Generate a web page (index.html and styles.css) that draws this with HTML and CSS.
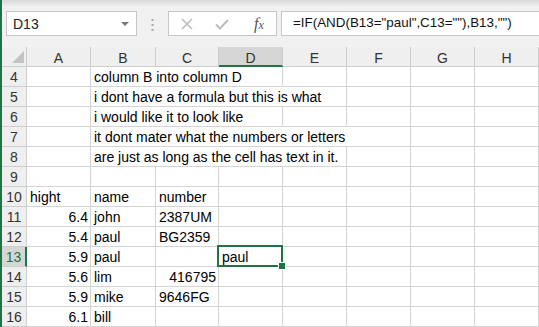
FILE: index.html
```html
<!DOCTYPE html>
<html lang="en">
<head>
  <meta charset="UTF-8">
  <title>Sheet</title>
  <link rel="stylesheet" href="styles.css">
</head>
<body>
  <div class="app">
    <!-- Barre de formule -->
    <div class="bar">
      <div class="namebox">
        <span>D13</span>
        <svg class="caret" width="8" height="5" viewBox="0 0 8 5"><path d="M0 0h8L4 4z" fill="#7a7a7a"/></svg>
      </div>
      <svg class="grip" width="3" height="12" viewBox="0 0 3 12">
        <rect x="0.5" y="0" width="2" height="2" fill="#a6a6a6"/>
        <rect x="0.5" y="5" width="2" height="2" fill="#a6a6a6"/>
        <rect x="0.5" y="10" width="2" height="2" fill="#a6a6a6"/>
      </svg>
      <div class="fxbox">
        <svg width="14" height="14" viewBox="0 0 14 14"><path d="M2 2l10 10M12 2L2 12" stroke="#bdbdbd" stroke-width="1.6" fill="none"/></svg>
        <svg width="16" height="14" viewBox="0 0 16 14"><path d="M2 7.5l4 4L14 3" stroke="#bdbdbd" stroke-width="2" fill="none"/></svg>
        <span class="fx">f<small>x</small></span>
      </div>
      <div class="formula">=IF(AND(B13="paul",C13=""),B13,"")</div>
    </div>

    <!-- Grille -->
    <div class="grid">
      <div class="corner"></div>
      <div class="ch">A</div><div class="ch">B</div><div class="ch">C</div><div class="ch sel">D</div>
      <div class="ch">E</div><div class="ch">F</div><div class="ch">G</div><div class="ch">H</div>

      <div class="rh">4</div><div class="c"></div><div class="c s3">column B into column D</div><div class="c"></div><div class="c"></div><div class="c"></div><div class="c"></div>
      <div class="rh">5</div><div class="c"></div><div class="c s4">i dont have a formula but this is what</div><div class="c"></div><div class="c"></div><div class="c"></div>
      <div class="rh">6</div><div class="c"></div><div class="c s3">i would like it to look like</div><div class="c"></div><div class="c"></div><div class="c"></div><div class="c"></div>
      <div class="rh">7</div><div class="c"></div><div class="c s5">it dont mater what the numbers or letters</div><div class="c"></div><div class="c"></div>
      <div class="rh">8</div><div class="c"></div><div class="c s4">are just as long as the cell has text in it.</div><div class="c"></div><div class="c"></div><div class="c"></div>
      <div class="rh">9</div><div class="c"></div><div class="c"></div><div class="c"></div><div class="c"></div><div class="c"></div><div class="c"></div><div class="c"></div><div class="c"></div>

      <div class="rh">10</div><div class="c">hight</div><div class="c">name</div><div class="c">number</div><div class="c"></div><div class="c"></div><div class="c"></div><div class="c"></div><div class="c"></div>
      <div class="rh">11</div><div class="c num">6.4</div><div class="c">john</div><div class="c">2387UM</div><div class="c"></div><div class="c"></div><div class="c"></div><div class="c"></div><div class="c"></div>
      <div class="rh">12</div><div class="c num">5.4</div><div class="c">paul</div><div class="c">BG2359</div><div class="c"></div><div class="c"></div><div class="c"></div><div class="c"></div><div class="c"></div>
      <div class="rh sel">13</div><div class="c num">5.9</div><div class="c">paul</div><div class="c"></div><div class="c active">paul</div><div class="c"></div><div class="c"></div><div class="c"></div><div class="c"></div>
      <div class="rh">14</div><div class="c num">5.6</div><div class="c">lim</div><div class="c num">416795</div><div class="c"></div><div class="c"></div><div class="c"></div><div class="c"></div><div class="c"></div>
      <div class="rh">15</div><div class="c num">5.9</div><div class="c">mike</div><div class="c">9646FG</div><div class="c"></div><div class="c"></div><div class="c"></div><div class="c"></div><div class="c"></div>
      <div class="rh">16</div><div class="c num">6.1</div><div class="c">bill</div><div class="c"></div><div class="c"></div><div class="c"></div><div class="c"></div><div class="c"></div><div class="c"></div>
    </div>
  </div>
</body>
</html>
```

FILE: styles.css
```css
* {
  box-sizing: border-box;
}

body {
  margin: 0;
  font-family: "Liberation Sans", Arial, sans-serif;
  background: #fff;
  overflow: hidden;
}

.app {
  width: 539px;
  height: 327px;
  border-left: 2px solid #217346;
}

/* Barre de formule */
.bar {
  height: 47px;
  display: flex;
  align-items: flex-start;
  padding-top: 11px;
  background: linear-gradient(#d9d9d9, #f1f1f1 7px);
}

.namebox {
  width: 131px;
  height: 25px;
  margin-left: 4px;
  background: #fff;
  border: 1px solid #c6c6c6;
  display: flex;
  align-items: center;
  justify-content: space-between;
  padding: 0 7px 0 6px;
  font-size: 14px;
  color: #222;
}

.caret {
  margin-top: 1px;
}

.grip {
  margin: 8px 14px 0 14px;
}

.fxbox {
  width: 109px;
  height: 25px;
  background: #fff;
  border: 1px solid #c6c6c6;
  display: flex;
  align-items: center;
  gap: 20px;
  padding-left: 11px;
}

.fx {
  font-family: "Liberation Serif", serif;
  font-style: italic;
  font-size: 16px;
  color: #555;
  margin-left: 4px;
}

.fx small {
  font-size: 12px;
}

.formula {
  flex: 1;
  height: 25px;
  margin-left: 4px;
  background: #fff;
  border: 1px solid #c6c6c6;
  border-right: 0;
  padding: 3px 0 0 11px;
  font-size: 13.4px;
  color: #111;
  white-space: nowrap;
}

/* Grille */
.grid {
  display: grid;
  grid-template-columns: 25px 64px 65px 63px 64px 64px 64px 64px 64px;
  grid-auto-rows: 20px;
  font-size: 14px;
}

.corner,
.ch,
.rh {
  background: #efefef;
  color: #333;
  font-size: 14px;
  border-right: 1px solid #cdcdcd;
  border-bottom: 1px solid #cdcdcd;
}

.corner {
  position: relative;
}

.corner::after {
  content: "";
  position: absolute;
  right: 2px;
  bottom: 3px;
  border-left: 12px solid transparent;
  border-bottom: 12px solid #c3c3c3;
}

.ch {
  text-align: center;
  line-height: 20px;
  padding-top: 1px;
}

.ch.sel {
  background: #d6d6d6;
  border-bottom: 2px solid #217346;
}

.rh {
  text-align: center;
  line-height: 20px;
}

.rh.sel {
  background: #d6d6d6;
  color: #217346;
  border-right: 2px solid #217346;
}

.c {
  position: relative;
  border-right: 1px solid #d4d4d4;
  border-bottom: 1px solid #d4d4d4;
  padding: 1px 0 0 3px;
  line-height: 18px;
  white-space: nowrap;
  color: #000;
}

.c.num {
  text-align: right;
  padding-right: 2px;
}

.s3 { grid-column: span 3; }
.s4 { grid-column: span 4; }
.s5 { grid-column: span 5; }

/* Cellule active */
.c.active::after {
  content: "";
  position: absolute;
  top: -2px;
  left: -2px;
  right: -1px;
  bottom: -1px;
  border: 2px solid #217346;
}

.c.active::before {
  content: "";
  position: absolute;
  right: -4px;
  bottom: -4px;
  width: 6px;
  height: 6px;
  background: #217346;
  border: 1px solid #fff;
  z-index: 1;
}
```
